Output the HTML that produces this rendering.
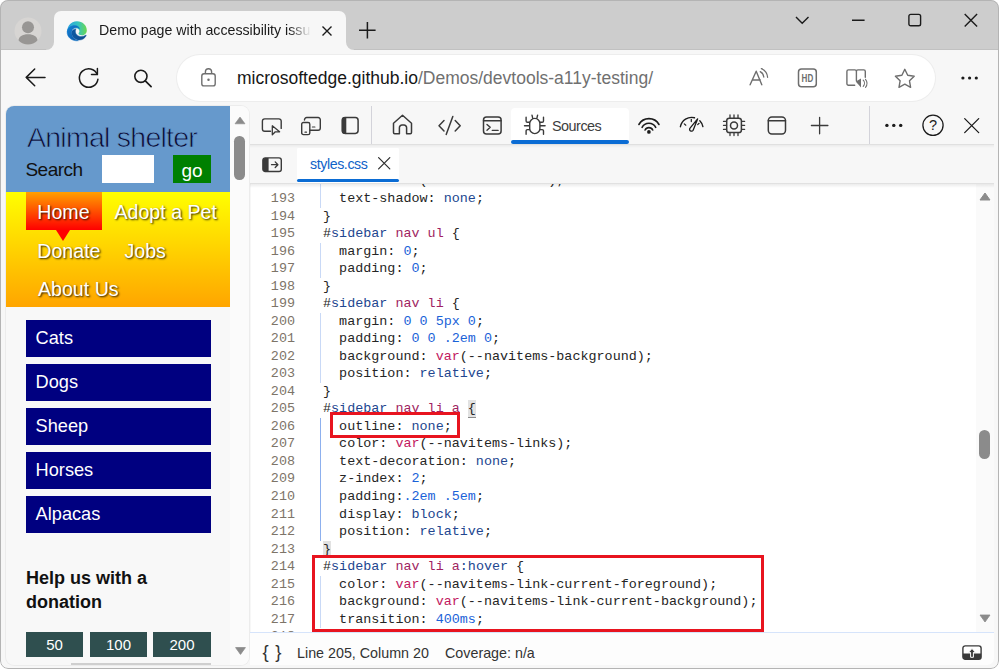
<!DOCTYPE html>
<html lang="en">
<head>
<meta charset="utf-8">
<title>Demo page with accessibility issues</title>
<style>
html,body{margin:0;padding:0}
body{width:1000px;height:670px;overflow:hidden;background:#fff;position:relative;font-family:"Liberation Sans",sans-serif;color:#1b1b1b}
.a{position:absolute}
svg{position:absolute;overflow:visible}
.t{position:absolute;white-space:nowrap;line-height:1}
#win{left:0;top:0;width:999px;height:669px;border-radius:8px;background:#f7f7f7;overflow:hidden}
#winborder{left:0;top:0;width:997px;height:667px;border:1px solid #b4b4b4;border-radius:8px;z-index:50}
#titlebar{left:0;top:0;width:1000px;height:49.500px;background:#cdcdcd;border-bottom:1px solid #c1c1c1;box-sizing:border-box}
#tab{left:54px;top:11px;width:292px;height:38.500px;background:#f7f7f7;border-radius:7px 7px 0 0}
.tabfoot{width:8px;height:8px;top:41.500px;background:#f7f7f7}
.tabfoot i{position:absolute;left:0;top:0;width:8px;height:8px;background:#cdcdcd}
#pill{left:177px;top:54.500px;width:758px;height:46px;background:#fff;border-radius:23px;box-shadow:0 0 0 1px #ededed}
/* page */
#page{left:6px;top:106px;width:243px;height:559px;border-radius:8px;background:#f8f8f8;overflow:hidden;box-shadow:0 0 0 1px #ececec}
#hdr{left:0;top:0;width:224px;height:86px;background:#6699cc}
#nav{left:0;top:86px;width:224px;height:114.600px;background:linear-gradient(#ffff00,#ffa500)}
#home{left:20px;top:0;width:76px;height:38px;background:linear-gradient(#ffa000,#ff0000)}
#homearrow{left:49.500px;top:38px;width:0;height:0;border-left:7px solid transparent;border-right:7px solid transparent;border-top:11.500px solid #ff0000}
.nl{color:#fff;font-size:19.600px;text-shadow:1px 1px 2px rgba(0,0,0,.85)}
.cat{left:19.600px;width:185.400px;height:37px;background:#000080}
.cat span{position:absolute;left:10px;top:7px;color:#fff;font-size:18.200px;line-height:22px;white-space:nowrap}
.don{top:526px;height:25px;background:#2f4f4f;color:#fff;font-size:15px;text-align:center;line-height:26px}
#pscroll{left:224px;top:0;width:19px;height:559px;background:#fbfbfb}
/* devtools */
#dt{left:250px;top:106px;width:744px;height:559px;background:#f7f7f7;border-radius:0 0 7px 0;overflow:hidden}
#dtbar{left:0;top:0;width:744px;height:38px;background:#f7f7f7;border-bottom:1px solid #e0e0e0}
.shd{left:0;width:744px;pointer-events:none}
#srctab{left:261px;top:2px;width:118px;height:36px;background:#fff;border-radius:4px 4px 0 0}
#srcline{left:261px;top:34px;width:118px;height:4px;background:#0b6cd4;border-radius:2px}
#edbar{left:0;top:39px;width:744px;height:38px;background:#f7f7f7;border-bottom:1px solid #e1e1e1}
#filetab{left:47px;top:41px;width:102px;height:36px;background:#fff;border-radius:3px 3px 0 0}
#fileline{left:47px;top:73px;width:102px;height:3px;background:#0b6cd4;border-radius:1.500px}
#code{left:1px;top:78px;width:725px;height:448px;background:#fff;overflow:hidden}
#cscroll{left:726px;top:78px;width:18px;height:448px;background:#fafafa}
#status{left:0;top:526px;width:744px;height:33px;background:#fdfdfd;border-top:1.500px solid #d6e4fb;box-sizing:border-box}
.ln{position:absolute;left:0;width:44px;text-align:right;color:#7d7468;font:13.42px/17.5px "Liberation Mono",monospace;white-space:pre}
.cl{position:absolute;left:72px;color:#252525;font:13.42px/17.5px "Liberation Mono",monospace;white-space:pre}
.s{color:#22468f}.g{color:#a01f62}.n{color:#1a62d8}.v{color:#c2185f}.k{color:#22468f}
.guide{position:absolute;left:69px;width:1px;background:#c9d9f6}
.bm{background:#e2e2e2;display:inline-block;height:17.500px;vertical-align:top}
.bmu{box-shadow:inset 0 -1px 0 #8a8a8a}
.red{position:absolute;border:3px solid #e8141f;box-sizing:border-box}
</style>
</head>
<body>
<div id="win" class="a">
  <div id="titlebar" class="a"></div>
  <div id="tab" class="a"></div>
  <div class="a tabfoot" style="left:46px"><i style="border-radius:0 0 8px 0"></i></div>
  <div class="a tabfoot" style="left:346px"><i style="border-radius:0 0 0 8px"></i></div>
  <div id="pill" class="a"></div>

  <!-- profile avatar -->
  <svg style="left:14px;top:17px" width="28" height="28" viewBox="0 0 28 28">
    <defs><clipPath id="avc"><circle cx="14" cy="14" r="13.5"/></clipPath></defs>
    <circle cx="14" cy="14" r="13.5" fill="#d7d5d3"/>
    <g clip-path="url(#avc)" fill="#989694">
      <circle cx="14" cy="10.2" r="6"/>
      <path d="M4.5 23.5c0-4 4-6.3 9.5-6.3s9.500 2.300 9.500 6.300c0 3-4 4.500-9.500 4.500s-9.500-1.500-9.500-4.500z"/>
    </g>
  </svg>
  <!-- edge logo -->
  <svg style="left:67px;top:20.600px" width="20" height="20" viewBox="0 0 20 20">
    <defs>
      <linearGradient id="eg1" x1="0" y1="0" x2="1" y2="0"><stop offset="0" stop-color="#2a9fe0"/><stop offset=".55" stop-color="#35c4c0"/><stop offset="1" stop-color="#6bd84f"/></linearGradient>
      <linearGradient id="eg2" x1="0" y1="0" x2="1" y2="1"><stop offset="0" stop-color="#1382d6"/><stop offset="1" stop-color="#0b4f9e"/></linearGradient>
      <linearGradient id="eg3" x1="0" y1="0" x2="1" y2="0"><stop offset="0" stop-color="#0c59a4"/><stop offset="1" stop-color="#114a8b"/></linearGradient>
    </defs>
    <path d="M10 0.200C15.600 0.200 19.800 4.300 19.800 9.200c0 3.200-2.300 5-5 5-2 0-3.300-.8-3.300-1.700 0-.7.900-1 .9-2.300 0-1.700-1.600-3.100-3.900-3.100-3.600 0-6.900 2.800-8.300 5.700C-.9 6.300 3.600 0.200 10 0.200z" fill="url(#eg1)"/>
    <path d="M0.200 10.300C0.900 6.700 4.300 4.600 7.600 4.600c2.700 0 4.600 1.400 5 3.200-1-.9-2.200-1.200-3.300-1.200-2.800 0-4.600 2.300-4.600 5.200 0 3.700 2.600 7 6.700 7.900C5.400 20.600-.5 16.300.2 10.300z" fill="url(#eg2)" stroke="#1178cf" stroke-width=".5"/>
    <path d="M4.700 11.800c0 4.300 3.600 7.300 7.500 7.300 2.900 0 5.700-1.700 7-4.400.2-.5-.2-.8-.6-.5-1.300.9-2.700 1.300-4.200 1.300-3.300 0-6-2.200-6-5.300 0-1 .3-1.900.8-2.500-2.600.2-4.500 1.900-4.500 4.100z" fill="url(#eg3)" stroke="#0e55a0" stroke-width=".4"/>
  </svg>
  <div class="t" id="tabtitle" style="left:99px;top:22px;font-size:14.2px;line-height:17px;width:216px;overflow:hidden;color:#1b1b1b;-webkit-mask-image:linear-gradient(90deg,#000 190px,transparent 212px);mask-image:linear-gradient(90deg,#000 190px,transparent 212px)">Demo page with accessibility issues</div>
  <!-- tab close -->
  <svg style="left:322px;top:26px" width="10" height="10" viewBox="0 0 10 10"><path d="M.5.500l9 9M9.500.500l-9 9" stroke="#1b1b1b" stroke-width="1.400" fill="none"/></svg>
  <!-- new tab plus -->
  <svg style="left:359px;top:22px" width="17" height="17" viewBox="0 0 17 17"><path d="M8.400 0v16.500M0 8.200h16.600" stroke="#1b1b1b" stroke-width="1.500" fill="none"/></svg>
  <!-- window controls -->
  <svg style="left:795px;top:16px" width="15" height="9" viewBox="0 0 15 9"><path d="M1 1l6.200 6.300L13.500 1" stroke="#1b1b1b" stroke-width="1.400" fill="none"/></svg>
  <svg style="left:852px;top:19px" width="13" height="3" viewBox="0 0 13 3"><path d="M0 1.300h12.600" stroke="#1b1b1b" stroke-width="1.400"/></svg>
  <svg style="left:908px;top:13px" width="14" height="14" viewBox="0 0 14 14"><rect x=".9" y="1.400" width="11.700" height="11.300" rx="1.800" stroke="#1b1b1b" stroke-width="1.400" fill="none"/></svg>
  <svg style="left:964px;top:13px" width="14" height="14" viewBox="0 0 14 14"><path d="M.7 1l12.400 12.400M13.100 1L.7 13.400" stroke="#1b1b1b" stroke-width="1.400" fill="none"/></svg>
  <!-- nav buttons -->
  <svg style="left:25px;top:68px" width="21" height="19" viewBox="0 0 21 19"><path d="M1.200 9.400H20M9.700 1L1.200 9.400l8.500 8.400" stroke="#1b1b1b" stroke-width="1.500" fill="none" stroke-linecap="round" stroke-linejoin="round"/></svg>
  <svg style="left:78px;top:67px" width="22" height="22" viewBox="0 0 22 22"><path d="M19.900 12.300A9.300 9.300 0 1 1 19.260 7.370" stroke="#1b1b1b" stroke-width="1.500" fill="none" stroke-linecap="round"/><path d="M19.400 1.600v5.800h-5.900" stroke="#1b1b1b" stroke-width="1.500" fill="none" stroke-linecap="round" stroke-linejoin="round"/></svg>
  <svg style="left:133px;top:69px" width="20" height="19" viewBox="0 0 20 19"><circle cx="7.900" cy="7.300" r="6.100" stroke="#1b1b1b" stroke-width="1.600" fill="none"/><path d="M12.300 11.800l5.800 5.900" stroke="#1b1b1b" stroke-width="1.700" stroke-linecap="round"/></svg>
  <!-- lock -->
  <svg style="left:200px;top:67px" width="18" height="21" viewBox="0 0 18 21"><rect x="1.800" y="6.800" width="13.400" height="12.100" rx="2.200" stroke="#6e6e6e" stroke-width="1.400" fill="none"/><path d="M5.400 6.800V4.800a3.100 3.100 0 0 1 6.200 0v2" stroke="#6e6e6e" stroke-width="1.400" fill="none"/><circle cx="8.500" cy="12.800" r="1.250" fill="#6e6e6e"/></svg>
  <div class="t" style="left:237px;top:67px;font-size:17.5px;line-height:22px;color:#707070;letter-spacing:0px"><span style="color:#161616">microsoftedge.github.io</span>/Demos/devtools-a11y-testing/</div>
  <!-- read aloud -->
  <svg style="left:749px;top:67px" width="21" height="20" viewBox="0 0 21 20"><path d="M1.100 17.800L7.200 4.200l5.600 13.600M3.300 13h8" stroke="#6e6e6e" stroke-width="1.400" fill="none" stroke-linecap="round" stroke-linejoin="round"/><path d="M11.200 4.700a6.700 6.700 0 0 1 3.600 5.300M12.400 1.600a10.500 10.500 0 0 1 6.200 8.700" stroke="#6e6e6e" stroke-width="1.300" fill="none" stroke-linecap="round"/></svg>
  <!-- HD -->
  <svg style="left:797px;top:68px" width="21" height="20" viewBox="0 0 21 20"><rect x="1.500" y="1.100" width="17.800" height="17.700" rx="3" stroke="#6e6e6e" stroke-width="1.500" fill="none"/><text x="10.400" y="13.700" text-anchor="middle" font-family="Liberation Sans, sans-serif" font-weight="bold" font-size="10.200" fill="#6e6e6e" textLength="11.600" lengthAdjust="spacingAndGlyphs">HD</text></svg>
  <!-- immersive reader -->
  <svg style="left:846px;top:69px" width="22" height="19" viewBox="0 0 22 19"><path d="M8.700 16.300H2.400a1.500 1.500 0 0 1-1.500-1.500V2.400A1.500 1.500 0 0 1 2.400.9h6.500a1.500 1.500 0 0 1 1.500 1.500v9M10.400 2.400A1.500 1.500 0 0 1 11.900.9h5.900a1.500 1.500 0 0 1 1.500 1.500v5.800" stroke="#6e6e6e" stroke-width="1.400" fill="none" stroke-linecap="round"/><path d="M9.700 12.600l5.300-3v9z" fill="#6e6e6e"/><path d="M17.200 11.200a4.500 4.500 0 0 1 0 6.200M19.500 10.300a6.500 6.500 0 0 1 0 8" stroke="#6e6e6e" stroke-width="1.100" fill="none" stroke-linecap="round"/></svg>
  <!-- star -->
  <svg style="left:894px;top:68px" width="22" height="21" viewBox="0 0 22 21"><path d="M10.800 1.300l2.900 6 6.500.9-4.700 4.600 1.100 6.500-5.800-3.100-5.800 3.100 1.100-6.500L1.400 8.200l6.500-.9z" stroke="#6e6e6e" stroke-width="1.400" fill="none" stroke-linejoin="round"/></svg>
  <!-- menu dots -->
  <svg style="left:961px;top:76px" width="18" height="4" viewBox="0 0 18 4"><circle cx="1.900" cy="2" r="1.600" fill="#1b1b1b"/><circle cx="8.600" cy="2" r="1.600" fill="#1b1b1b"/><circle cx="15.300" cy="2" r="1.600" fill="#1b1b1b"/></svg>

  <!-- web page -->
  <div id="page" class="a">
    <div id="hdr" class="a"></div>

    <div class="t" style="left:21px;top:14px;font-size:28.500px;line-height:34px;color:#0c0c32;letter-spacing:-0.750px;-webkit-text-stroke:0.750px #6699cc">Animal shelter</div>
    <div class="t" style="left:19.500px;top:52px;font-size:19px;line-height:24px;color:#111;letter-spacing:-0.550px">Search</div>
    <div class="a" style="left:96px;top:49px;width:52px;height:28px;background:#fff"></div>
    <div class="a" style="left:167px;top:49px;width:38px;height:28px;background:#008000"></div>
    <div class="t" style="left:167px;top:53px;width:38px;text-align:center;font-size:19px;line-height:24px;color:#fff">go</div>
    <div id="nav" class="a">
      <div id="home" class="a"></div>
      <div id="homearrow" class="a"></div>

      <div class="t nl" style="left:31.300px;top:8px;line-height:24px">Home</div>
      <div class="t nl" style="left:108.500px;top:8px;line-height:24px">Adopt a Pet</div>
      <div class="t nl" style="left:31.300px;top:46.500px;line-height:24px">Donate</div>
      <div class="t nl" style="left:118.500px;top:46.500px;line-height:24px">Jobs</div>
      <div class="t nl" style="left:32px;top:85px;line-height:24px">About Us</div>
    </div>

    <div class="a cat" style="top:214px"><span>Cats</span></div>
    <div class="a cat" style="top:258px"><span>Dogs</span></div>
    <div class="a cat" style="top:302px"><span>Sheep</span></div>
    <div class="a cat" style="top:346px"><span>Horses</span></div>
    <div class="a cat" style="top:390px"><span>Alpacas</span></div>
    <div class="t" style="left:20px;top:460px;font-size:18px;line-height:24px;font-weight:bold;color:#111;white-space:normal;width:150px">Help us with a donation</div>
    <div class="a don" style="left:20px;width:57px">50</div>
    <div class="a don" style="left:84px;width:57px">100</div>
    <div class="a don" style="left:147px;width:58px">200</div>
    <div class="a" style="left:65px;top:557px;width:140px;height:2px;background:#cfcfcf"></div>
    <div id="pscroll" class="a">
      <svg style="left:3.500px;top:10px" width="12" height="9" viewBox="0 0 12 9"><path d="M6 1L11 7.800H1z" fill="#8b8b8b" stroke="#8b8b8b" stroke-width=".6" stroke-linejoin="round"/></svg>
      <div class="a" style="left:4.400px;top:30px;width:10.400px;height:44px;border-radius:5.200px;background:#8b8b8b"></div>
      <svg style="left:4.500px;top:541px" width="11" height="8" viewBox="0 0 11 8"><path d="M.6.600h9.800L5.500 7.400z" fill="#8b8b8b" stroke="#8b8b8b" stroke-width=".8" stroke-linejoin="round"/></svg>
    </div>
  </div>

  <!-- devtools -->
  <div id="dt" class="a">
    <div id="dtbar" class="a"></div>
    <div id="srctab" class="a"></div>
    <div id="srcline" class="a"></div>
    <div id="edbar" class="a"></div>
    <div id="filetab" class="a"></div>
    <div id="fileline" class="a"></div>
    <div id="code" class="a">
<!--DTGEN-->      <div class="ln" style="top:-11.53px">192</div><div class="cl" style="top:-11.53px">  color: <span class="v">var</span>(--sitenav-arrow);</div>
      <div class="ln" style="top:6.0px">193</div><div class="cl" style="top:6.0px">  text-shadow: <span class="k">none</span>;</div>
      <div class="ln" style="top:23.53px">194</div><div class="cl" style="top:23.53px">}</div>
      <div class="ln" style="top:41.06px">195</div><div class="cl" style="top:41.06px">#<span class="s">sidebar</span> <span class="g">nav</span> <span class="g">ul</span> {</div>
      <div class="ln" style="top:58.59px">196</div><div class="cl" style="top:58.59px">  margin: <span class="n">0</span>;</div>
      <div class="ln" style="top:76.12px">197</div><div class="cl" style="top:76.12px">  padding: <span class="n">0</span>;</div>
      <div class="ln" style="top:93.65px">198</div><div class="cl" style="top:93.65px">}</div>
      <div class="ln" style="top:111.18px">199</div><div class="cl" style="top:111.18px">#<span class="s">sidebar</span> <span class="g">nav</span> <span class="g">li</span> {</div>
      <div class="ln" style="top:128.71px">200</div><div class="cl" style="top:128.71px">  margin: <span class="n">0</span> <span class="n">0</span> <span class="n">5px</span> <span class="n">0</span>;</div>
      <div class="ln" style="top:146.24px">201</div><div class="cl" style="top:146.24px">  padding: <span class="n">0</span> <span class="n">0</span> <span class="n">.2em</span> <span class="n">0</span>;</div>
      <div class="ln" style="top:163.77px">202</div><div class="cl" style="top:163.77px">  background: <span class="v">var</span>(--navitems-background);</div>
      <div class="ln" style="top:181.3px">203</div><div class="cl" style="top:181.3px">  position: <span class="k">relative</span>;</div>
      <div class="ln" style="top:198.83px">204</div><div class="cl" style="top:198.83px">}</div>
      <div class="ln" style="top:216.36px">205</div><div class="cl" style="top:216.36px">#<span class="s">sidebar</span> <span class="g">nav</span> <span class="g">li</span> <span class="g">a</span> <span class="bm bmu">{</span></div>
      <div class="ln" style="top:233.89px">206</div><div class="cl" style="top:233.89px">  outline: <span class="k">none</span>;</div>
      <div class="ln" style="top:251.42px">207</div><div class="cl" style="top:251.42px">  color: <span class="v">var</span>(--navitems-links);</div>
      <div class="ln" style="top:268.95px">208</div><div class="cl" style="top:268.95px">  text-decoration: <span class="k">none</span>;</div>
      <div class="ln" style="top:286.48px">209</div><div class="cl" style="top:286.48px">  z-index: <span class="n">2</span>;</div>
      <div class="ln" style="top:304.01px">210</div><div class="cl" style="top:304.01px">  padding:<span class="n">.2em</span> <span class="n">.5em</span>;</div>
      <div class="ln" style="top:321.54px">211</div><div class="cl" style="top:321.54px">  display: <span class="k">block</span>;</div>
      <div class="ln" style="top:339.07px">212</div><div class="cl" style="top:339.07px">  position: <span class="k">relative</span>;</div>
      <div class="ln" style="top:356.6px">213</div><div class="cl" style="top:356.6px"><span class="bm">}</span></div>
      <div class="ln" style="top:374.13px">214</div><div class="cl" style="top:374.13px">#<span class="s">sidebar</span> <span class="g">nav</span> <span class="g">li</span> <span class="g">a</span><span class="s">:hover</span> {</div>
      <div class="ln" style="top:391.66px">215</div><div class="cl" style="top:391.66px">  color: <span class="v">var</span>(--navitems-link-current-foreground);</div>
      <div class="ln" style="top:409.19px">216</div><div class="cl" style="top:409.19px">  background: <span class="v">var</span>(--navitems-link-current-background);</div>
      <div class="ln" style="top:426.72px">217</div><div class="cl" style="top:426.72px">  transition: <span class="n">400ms</span>;</div>
      <div class="ln" style="top:444.25px">218</div><div class="cl" style="top:444.25px">}</div>
      <div class="guide" style="top:-46.59px;height:70.12px"></div>
      <div class="guide" style="top:58.59px;height:35.06px"></div>
      <div class="guide" style="top:128.71px;height:70.12px"></div>
      <div class="guide" style="top:233.89px;height:122.71px;background:#8db0ee"></div>
      <div class="guide" style="top:391.66px;height:52.59px"></div>
      <div class="red" style="left:79px;top:228px;width:130px;height:25.500px"></div>
      <div class="red" style="left:61px;top:371px;width:452px;height:76.500px"></div>
<!--/DTGEN-->
    </div>
    <div id="cscroll" class="a"></div>
    <div class="a shd" style="top:39px;height:3px;background:linear-gradient(#ebebeb,#f7f7f7)"></div>
    <div class="a shd" style="top:78px;height:4px;background:linear-gradient(rgba(0,0,0,.075),rgba(0,0,0,0))"></div>
    <div id="status" class="a"></div>
  </div>
<!--DTGEN-->  <svg style="left:261px;top:117px" width="22" height="19" viewBox="0 0 22 19"><path d="M9.500 14.300H3.700a2.300 2.300 0 0 1-2.300-2.300V4.200a2.300 2.300 0 0 1 2.300-2.300h14.200a2.300 2.300 0 0 1 2.300 2.300v7.200" stroke="#3a3a3a" stroke-width="1.4" fill="none" stroke-linecap="round" stroke-linejoin="round" /><path d="M11.300 8.800v9l3-3h4.300z" stroke="#3a3a3a" stroke-width="1.3" fill="none" stroke-linecap="round" stroke-linejoin="round" /></svg>
  <svg style="left:300px;top:116px" width="22" height="20" viewBox="0 0 22 20"><path d="M4.500 4V3.700a2.200 2.200 0 0 1 2.200-2.200h11.400a2.200 2.200 0 0 1 2.200 2.200v8.300a2.200 2.200 0 0 1-2.200 2.200H10" stroke="#3a3a3a" stroke-width="1.4" fill="none" stroke-linecap="round" stroke-linejoin="round" /><path d="M3.400 6.500h4.700a1.700 1.700 0 0 1 1.700 1.700v8.700a1.700 1.700 0 0 1-1.700 1.700H3.400a1.700 1.700 0 0 1-1.700-1.700V8.200a1.700 1.700 0 0 1 1.700-1.700z" stroke="#3a3a3a" stroke-width="1.4" fill="none" stroke-linecap="round" stroke-linejoin="round" /><path d="M5 16.200h1.500M12.400 11h2.500" stroke="#3a3a3a" stroke-width="1.2" fill="none" stroke-linecap="round" stroke-linejoin="round" /></svg>
  <svg style="left:341px;top:116px" width="19" height="19" viewBox="0 0 19 19"><path d="M3.600 1.100h1.700v16.800H3.600a2.800 2.800 0 0 1-2.800-2.800V3.900a2.800 2.800 0 0 1 2.800-2.800z" fill="#3a3a3a"/><rect x="1.300" y="1.600" width="15.800" height="15.800" rx="2.800" stroke="#3a3a3a" stroke-width="1.500" fill="none"/></svg>
  <div class="a" style="left:371px;top:106px;width:1px;height:38px;background:#d3d3da"></div>
  <div class="a" style="left:869px;top:106px;width:1px;height:38px;background:#d3d3da"></div>
  <svg style="left:392px;top:114px" width="21" height="21" viewBox="0 0 21 21"><path d="M1.500 9.200L10.500 1.300l9 7.900v9.300a1.200 1.200 0 0 1-1.200 1.200h-3.700v-6a2.600 2.600 0 0 0-2.600-2.600h-2a2.600 2.600 0 0 0-2.600 2.600v6H2.700a1.200 1.200 0 0 1-1.200-1.200z" stroke="#3a3a3a" stroke-width="1.5" fill="none" stroke-linecap="round" stroke-linejoin="round" /></svg>
  <svg style="left:438px;top:115px" width="23" height="21" viewBox="0 0 23 21"><path d="M6 5.600L1 10.800l5 5.200M14.800 1.400L8.200 19.400M17.200 5.600l5 5.200-5 5.200" stroke="#3a3a3a" stroke-width="1.5" fill="none" stroke-linecap="round" stroke-linejoin="round" /></svg>
  <svg style="left:482px;top:115px" width="21" height="21" viewBox="0 0 21 21"><rect x="1.500" y="1.900" width="17.600" height="17.200" rx="3" stroke="#3a3a3a" stroke-width="1.500" fill="none"/><path d="M1.500 5.800h17.600M5 9.400l3.200 2.900L5 15.200M10.300 15.400h5.800" stroke="#3a3a3a" stroke-width="1.4" fill="none" stroke-linecap="round" stroke-linejoin="round" /></svg>
  <svg style="left:524px;top:114px" width="22" height="21" viewBox="0 0 22 21"><path d="M5.700 9.500a5.100 5.100 0 0 1 10.200 0v5a5.100 5.100 0 0 1-10.200 0zM8 1.200l.7 3M13.600 1.200l-.7 3M.5 11.800h5.200M15.900 11.800h5.200M5.700 8.200H3.400a1.300 1.300 0 0 1-1.300-1.300V3.200M15.900 8.200h2.300a1.300 1.300 0 0 0 1.300-1.300V3.200M5.700 15.600H3.400a1.300 1.300 0 0 0-1.300 1.300v3.400M15.900 15.600h2.300a1.300 1.300 0 0 1 1.300 1.300v3.400" stroke="#3a3a3a" stroke-width="1.4" fill="none" stroke-linecap="round" stroke-linejoin="round" /></svg>
  <div class="t" style="left:552px;top:117px;font-size:14.400px;line-height:18px;color:#3d3d3d;letter-spacing:-0.500px">Sources</div>
  <svg style="left:638px;top:117px" width="22" height="18" viewBox="0 0 22 18"><path d="M.9 7.500A11.500 11.500 0 0 1 21 7.500M4.100 10.400A7.600 7.600 0 0 1 17.700 10.400M7.100 13A4.200 4.200 0 0 1 14.700 13" stroke="#1c1c1c" stroke-width="1.6" fill="none" stroke-linecap="round" stroke-linejoin="round" /><circle cx="10.900" cy="14.900" r="1.850" fill="#1c1c1c"/></svg>
  <svg style="left:679px;top:116px" width="25" height="17" viewBox="0 0 25 17"><path d="M1.400 10.700A11.500 11.500 0 0 1 15.500 1.750M20.800 4.750A11.500 11.500 0 0 1 23.900 10.600" stroke="#1c1c1c" stroke-width="1.4" fill="none" stroke-linecap="round" stroke-linejoin="round" /><path d="M5.300 7.900l1.500 1.300M12.300 3.300v2.300M20.100 7.300l-1.400 1.300" stroke="#1c1c1c" stroke-width="1.2" fill="none" stroke-linecap="round" stroke-linejoin="round" /><path d="M18.600 2.900L10.860 12.340A1.900 1.900 0 1 0 14.140 14.260z" stroke="#1c1c1c" stroke-width="1.3" fill="none" stroke-linecap="round" stroke-linejoin="round" /></svg>
  <svg style="left:723px;top:114px" width="22" height="23" viewBox="0 0 22 23"><rect x="3.700" y="4.200" width="14.700" height="14.400" rx="2.600" stroke="#3a3a3a" stroke-width="1.500" fill="none"/><circle cx="11" cy="11.400" r="3.500" stroke="#3a3a3a" stroke-width="1.500" fill="none"/><path d="M7 1v3M11 1v3M15 1v3M7 18.600v3M11 18.600v3M15 18.600v3M.5 7.400h3M.5 11.400h3M.5 15.400h3M18.600 7.400h3M18.600 11.400h3M18.600 15.400h3" stroke="#3a3a3a" stroke-width="1.3" fill="none" stroke-linecap="round" stroke-linejoin="round" /></svg>
  <svg style="left:767px;top:115px" width="20" height="21" viewBox="0 0 20 21"><rect x="1.300" y="1.900" width="17.200" height="17" rx="3.600" stroke="#3a3a3a" stroke-width="1.500" fill="none"/><path d="M1.300 5.700h17.200" stroke="#3a3a3a" stroke-width="1.4" fill="none" stroke-linecap="round" stroke-linejoin="round" /></svg>
  <svg style="left:811px;top:117px" width="18" height="18" viewBox="0 0 18 18"><path d="M8.600.300v16.500M.4 8.500h16.500" stroke="#3a3a3a" stroke-width="1.3" fill="none" stroke-linecap="round" stroke-linejoin="round" /></svg>
  <svg style="left:885px;top:123px" width="18" height="5" viewBox="0 0 18 5"><circle cx="1.900" cy="2.400" r="1.700" fill="#1c1c1c"/><circle cx="8.800" cy="2.400" r="1.700" fill="#1c1c1c"/><circle cx="15.700" cy="2.400" r="1.700" fill="#1c1c1c"/></svg>
  <svg style="left:922px;top:114px" width="23" height="23" viewBox="0 0 23 23"><circle cx="11" cy="11.300" r="10.100" stroke="#1c1c1c" stroke-width="1.300" fill="none"/><text x="11" y="16.300" text-anchor="middle" font-family="Liberation Sans, sans-serif" font-size="14.500" fill="#1c1c1c">?</text></svg>
  <svg style="left:964px;top:118px" width="16" height="15" viewBox="0 0 16 15"><path d="M.7.600l14 14M14.700.600L.7 14.600" stroke="#1c1c1c" stroke-width="1.3" fill="none" stroke-linecap="round" stroke-linejoin="round" /></svg>
  <svg style="left:262px;top:157px" width="21" height="16" viewBox="0 0 21 16"><path d="M3 .9h3.600v13.600H3A2.200 2.200 0 0 1 .8 12.300V3.100A2.200 2.200 0 0 1 3 .9z" fill="#3a3a3a"/><rect x=".9" y=".9" width="18.400" height="13.600" rx="2.300" stroke="#3a3a3a" stroke-width="1.400" fill="none"/><path d="M9.500 7.700h6M13.200 4.900l2.700 2.800-2.700 2.800" stroke="#3a3a3a" stroke-width="1.3" fill="none" stroke-linecap="round" stroke-linejoin="round" /></svg>
  <div class="t" style="left:310px;top:155px;font-size:14.200px;line-height:18px;color:#0f62c8;letter-spacing:-0.400px">styles.css</div>
  <svg style="left:378px;top:157px" width="13" height="13" viewBox="0 0 13 13"><path d="M.6.600l11.200 11.200M11.800.600L.6 11.800" stroke="#2b2b2b" stroke-width="1.2" fill="none" stroke-linecap="round" stroke-linejoin="round" /></svg>
  <svg style="left:979px;top:192px" width="12" height="9" viewBox="0 0 12 9"><path d="M6 1L11 8H1z" fill="#8b8b8b" stroke="#8b8b8b" stroke-width="1" stroke-linejoin="round"/></svg>
  <div class="a" style="left:979px;top:430px;width:11px;height:29px;border-radius:5.500px;background:#8b8b8b"></div>
  <svg style="left:979px;top:614px" width="12" height="9" viewBox="0 0 12 9"><path d="M1 1h10L6 8z" fill="#8b8b8b" stroke="#8b8b8b" stroke-width=".8" stroke-linejoin="round"/></svg>
  <div class="t" style="left:262.500px;top:641.500px;font-size:18.500px;line-height:20px;color:#333;word-spacing:1.500px">{ }</div>
  <div class="t" style="left:297px;top:644px;font-size:14.300px;line-height:18px;color:#333">Line 205, Column 20</div>
  <div class="t" style="left:445px;top:644px;font-size:14.300px;line-height:18px;color:#333">Coverage: n/a</div>
  <svg style="left:962px;top:645px" width="21" height="16" viewBox="0 0 21 16"><rect x=".9" y=".9" width="18.200" height="13.300" rx="2.300" stroke="#3a3a3a" stroke-width="1.400" fill="#fff"/><path d="M.9 8.600h18.200v3.400a2.200 2.200 0 0 1-2.200 2.200H3.100a2.200 2.200 0 0 1-2.200-2.200z" fill="#3a3a3a"/><path d="M8.600 12.300V7.400H6.400L10 3.500l3.600 3.900h-2.200v4.900z" fill="#3a3a3a" stroke="#fff" stroke-width="1"/></svg>
<!--/DTGEN-->
  <div id="winborder" class="a"></div>
</div>
</body>
</html>
